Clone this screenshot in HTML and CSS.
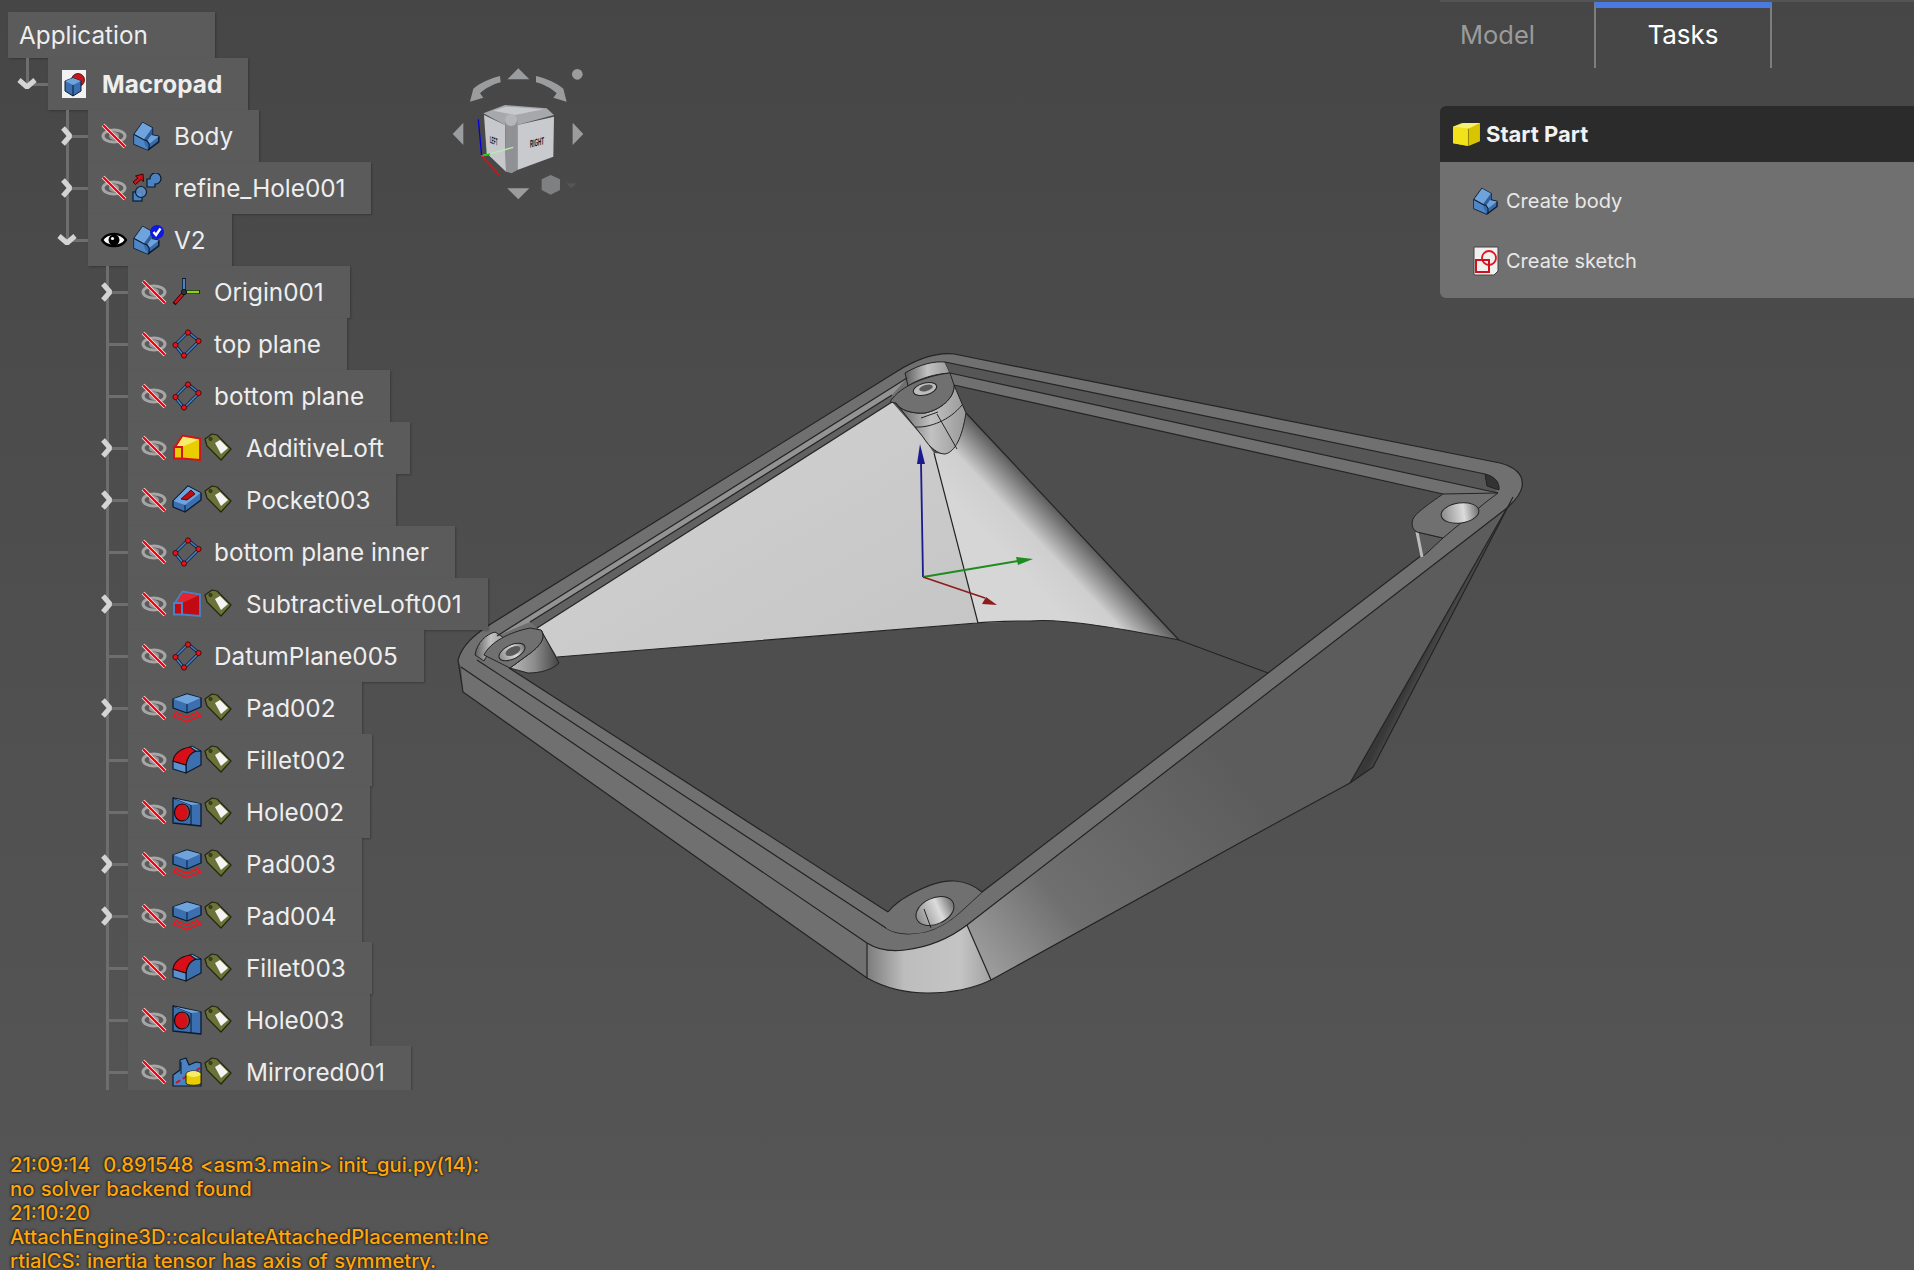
FILE: index.html
```html
<!DOCTYPE html>
<html>
<head>
  <title>FreeCAD - Macropad</title>
  <link rel="stylesheet" href="styles.css">
</head>
<body>
  <svg width="0" height="0" class="defs">
    <defs>
      <symbol id="i-eye-off" viewBox="0 0 26 26">
        <ellipse cx="13" cy="13" rx="11" ry="6" fill="none" stroke="#a6a6a6" stroke-width="3"/>
        <ellipse cx="13" cy="13" rx="5" ry="4" fill="#979797"/>
        <path d="M2 2L24 24" stroke="#fff" stroke-width="3.800"/>
        <path d="M2 2L24 24" stroke="#f0000f" stroke-width="2.400"/>
      </symbol>
      <symbol id="i-eye" viewBox="0 0 26 26">
        <path d="M1 13C6 5 20 5 25 13C20 21 6 21 1 13Z" fill="#fff" stroke="#000" stroke-width="2.400"/>
        <circle cx="13" cy="13" r="5.500" fill="#000"/>
        <circle cx="11.500" cy="11.500" r="1.600" fill="#fff"/>
      </symbol>
      <symbol id="i-body" viewBox="0 0 26 28">
        <path d="M1 12.500L9 1.500L18 6.500V13L24 14.500V19.500L14 27L1 21.500Z" fill="#3a6cab" stroke="#0b1b2e" stroke-width="1.400" stroke-linejoin="round"/>
        <path d="M1 12.500L9 1.500L18 6.500L10 17.500Z" fill="#6fa3dc"/>
        <path d="M10 17.500L18 6.500V13L13 18.500Z" fill="#2f5e9c"/>
        <path d="M13 18.500L17 13L24 14.500L15 21.500Z" fill="#6fa3dc"/>
        <path d="M1 12.500L10 17.500L11 22L14 27L1 21.500Z" fill="#4f86c6"/>
        <path d="M1 12.500L10 17.500L13 18.500L15 21.500V27" fill="none" stroke="#0b1b2e" stroke-width="1.100"/>
      </symbol>
      <symbol id="i-check" viewBox="0 0 14 14">
        <circle cx="7" cy="7" r="7" fill="#0f18e0"/>
        <path d="M3.500 7L6 10L10.500 3.500" fill="none" stroke="#fff" stroke-width="2.400"/>
      </symbol>
      <symbol id="i-refine" viewBox="0 0 30 30">
        <path d="M1 9L6 5L3.500 3L11 1L11.500 8.500L9 6.500L3.500 11.500Z" fill="#c8141e" stroke="#400" stroke-width="1"/>
        <path d="M15 14V6H18A5.500 5.500 0 1 1 23 11V14Z" fill="#4a82c4" stroke="#0b1b2e" stroke-width="1.200"/>
        <rect x="1" y="19" width="9" height="9" fill="#4a82c4" stroke="#0b1b2e" stroke-width="1.200"/>
        <circle cx="9" cy="19" r="5.500" fill="#5f95d2" fill-opacity=".85" stroke="#0b1b2e" stroke-width="1.200"/>
      </symbol>
      <symbol id="i-origin" viewBox="0 0 30 30">
        <path d="M12 1V15" stroke="#0b1b2e" stroke-width="4"/>
        <path d="M12 2V14" stroke="#4a82c4" stroke-width="2.400"/>
        <path d="M13 15H28" stroke="#1d2e0b" stroke-width="4"/>
        <path d="M14 15H27" stroke="#8ad11e" stroke-width="2.400"/>
        <path d="M11 17L2 27" stroke="#300" stroke-width="4"/>
        <path d="M11 17L3 26" stroke="#d0141e" stroke-width="2.400"/>
        <circle cx="12" cy="15" r="2.600" fill="#333" stroke="#111"/>
      </symbol>
      <symbol id="i-plane" viewBox="0 0 30 30">
        <path d="M16 3L27 12L12 27L3 16Z" fill="none" stroke="#0b1b2e" stroke-width="3"/>
        <path d="M16 3L27 12L12 27L3 16Z" fill="none" stroke="#4a82c4" stroke-width="1.600"/>
        <g fill="#e2141e" stroke="#300" stroke-width=".8">
          <circle cx="16" cy="3.500" r="2.600"/>
          <circle cx="26.500" cy="12" r="2.600"/>
          <circle cx="12" cy="26.500" r="2.600"/>
          <circle cx="3.500" cy="16" r="2.600"/>
        </g>
      </symbol>
      <symbol id="i-tag" viewBox="0 0 30 30">
        <path d="M1 6L8 1L13 2L27 16L17 27L3 13Z" fill="#6c7338" stroke="#23260f" stroke-width="1.200" stroke-linejoin="round"/>
        <circle cx="6.500" cy="6" r="1.700" fill="#3f4222" stroke="#23260f" stroke-width=".6"/>
        <path d="M11 10L16 7L24 15L17 21Z" fill="#f4f4f4"/>
      </symbol>
      <symbol id="i-loft-add" viewBox="0 0 30 30">
        <path d="M3 14L11 3L28 6V26L3 26Z" fill="#e8cd00"/>
        <path d="M4 14L11 3.500L27 6.500L10 14Z" fill="#f6eb6a"/>
        <path d="M3 14L10.500 2.500L28 5.500V27L10 25.500" fill="none" stroke="#d6101a" stroke-width="1.800"/>
        <rect x="2" y="14" width="8" height="11.500" fill="#e8cd00" stroke="#d6101a" stroke-width="2"/>
      </symbol>
      <symbol id="i-loft-sub" viewBox="0 0 30 30">
        <path d="M3 14L11 3L28 6V26L3 26Z" fill="#c20a12"/>
        <path d="M4 14L11 3.500L27 6.500L10 14Z" fill="#e4252d"/>
        <path d="M3 14L10.500 2.500L28 5.500V27L10 25.500" fill="none" stroke="#4a82c4" stroke-width="1.800"/>
        <rect x="2" y="14" width="8" height="11.500" fill="#c20a12" stroke="#4a82c4" stroke-width="2"/>
      </symbol>
      <symbol id="i-pocket" viewBox="0 0 30 30">
        <path d="M1 16L16 1L29 8V15L13 27L1 22Z" fill="#3b6fb0" stroke="#0b1b2e" stroke-width="1.300" stroke-linejoin="round"/>
        <path d="M1.500 16L16 1.500L28.500 8L13 20Z" fill="#6fa3dc"/>
        <path d="M13 20V27" stroke="#0b1b2e"/>
        <path d="M9 14L19 5L23 9L15 15Z" fill="#c00a12" stroke="#300" stroke-width=".8"/>
      </symbol>
      <symbol id="i-pad" viewBox="0 0 30 30">
        <path d="M1 6L15 .8L29 5V14L15 20L1 15Z" fill="#3b6fb0" stroke="#0b1b2e" stroke-width="1.300" stroke-linejoin="round"/>
        <path d="M1.500 6L15 1.300L28.500 5L15 11Z" fill="#6fa3dc"/>
        <path d="M15 11V20" stroke="#0b1b2e"/>
        <path d="M5 19L1.500 23L14.500 28.500L28.500 23L24 18.500M6 21L15 24L24 20.500" fill="none" stroke="#ee1620" stroke-width="1.800" stroke-linejoin="round"/>
      </symbol>
      <symbol id="i-fillet" viewBox="0 0 30 30">
        <path d="M14 19C15 12 18 8 24 6L29 6V20L14 28Z" fill="#3b6fb0" stroke="#0b1b2e" stroke-width="1.200" stroke-linejoin="round"/>
        <path d="M1 16L14 20V28L1 24Z" fill="#5a92d0" stroke="#0b1b2e" stroke-width="1.200" stroke-linejoin="round"/>
        <path d="M1 16C2 9 8 4 18 2L24 6C18 8 15 12 14 20Z" fill="#d80f18" stroke="#2a0a0a" stroke-width="1.200" stroke-linejoin="round"/>
        <path d="M18 2L20 1L29 6H24Z" fill="#6fa3dc" stroke="#0b1b2e" stroke-width="1"/>
      </symbol>
      <symbol id="i-hole" viewBox="0 0 30 30">
        <path d="M1 1L29 7V29L1 26Z" fill="#3b6fb0" stroke="#0b1b2e" stroke-width="1.300" stroke-linejoin="round"/>
        <path d="M1 1L19 8V28" fill="none" stroke="#0b1b2e" stroke-width="1"/>
        <path d="M2 1.500L29 7L19 8Z" fill="#6fa3dc"/>
        <ellipse cx="10" cy="15.500" rx="7.500" ry="8.500" fill="#d50f18" stroke="#1a0a0a" stroke-width="1.200"/>
        <path d="M11 7.500C16 9 17 22 11 24C18 24 19 8 11 7.500Z" fill="#555"/>
      </symbol>
      <symbol id="i-mirrored" viewBox="0 0 30 30">
        <path d="M1 18L8 13V3L14 1L17 8L24 5L29 6V29H1Z" fill="#4a82c4" stroke="#0b1b2e" stroke-width="1.200" stroke-linejoin="round"/>
        <path d="M9 5V17" stroke="#0b1b2e"/>
        <path d="M4 26L28 11" stroke="#d0101a" stroke-width="2" stroke-dasharray="5 3"/>
        <path d="M14 17C14 13 29 13 29 17V26C29 29 14 29 14 26Z" fill="#e8cd00" stroke="#2a2400" stroke-width="1"/>
        <ellipse cx="21.500" cy="17" rx="7" ry="3" fill="#f6eb6a"/>
      </symbol>
      <symbol id="i-doc" viewBox="0 0 24 28">
        <rect width="24" height="28" fill="#f2f2f2"/>
        <circle cx="16" cy="10" r="6.500" fill="#c8141e" stroke="#400" stroke-width=".8"/>
        <path d="M3 11L11 8L19 11V21L11 26L3 21Z" fill="#3b6fb0" stroke="#0b1b2e" stroke-width="1"/>
        <path d="M3 11L11 8L19 11L11 15Z" fill="#6fa3dc"/>
        <path d="M11 15V26" stroke="#0b1b2e"/>
      </symbol>
      <symbol id="i-sketch" viewBox="0 0 26 30">
        <path d="M1 1H25V25L21 29H1Z" fill="#f0f0f0" stroke="#444"/>
        <circle cx="16" cy="12" r="7" fill="none" stroke="#e2141e" stroke-width="1.800"/>
        <rect x="3" y="14" width="13" height="12" fill="none" stroke="#d0101a" stroke-width="2"/>
      </symbol>
      <symbol id="i-cube" viewBox="0 0 30 26">
        <path d="M1 5L10 1H29V20L17 25L1 22Z" fill="#d9c400"/>
        <path d="M1 5L17 7V25L1 22Z" fill="#f2e21a"/>
        <path d="M1 5L12 1H29L17 7Z" fill="#f8f070"/>
        <path d="M17 7V25" stroke="#8a7d00"/>
      </symbol>
      <symbol id="i-open" viewBox="0 0 24 16">
        <path d="M4 4L12 11L20 4" fill="none" stroke="#d4d4d4" stroke-width="5" stroke-linejoin="bevel"/>
      </symbol>
      <symbol id="i-closed" viewBox="0 0 16 24">
        <path d="M4 4L11 12L4 20" fill="none" stroke="#d4d4d4" stroke-width="5" stroke-linejoin="bevel"/>
      </symbol>

      <linearGradient id="g-face" x1="0" y1="0" x2="1" y2="1">
        <stop offset="0" stop-color="#d2d2d2"/>
        <stop offset="1" stop-color="#c5c5c5"/>
      </linearGradient>
      <linearGradient id="g-cone" gradientUnits="userSpaceOnUse" x1="1009" y1="561" x2="1060" y2="513">
        <stop offset="0" stop-color="#d6d6d6"/>
        <stop offset=".5" stop-color="#cfcfcf"/>
        <stop offset="1" stop-color="#5c5c5c"/>
      </linearGradient>
      <linearGradient id="g-wall" gradientUnits="userSpaceOnUse" x1="985" y1="960" x2="1230" y2="760">
        <stop offset="0" stop-color="#9a9a9a"/>
        <stop offset=".3" stop-color="#6f6f6f"/>
        <stop offset="1" stop-color="#5c5c5c"/>
      </linearGradient>
      <linearGradient id="g-sliver" gradientUnits="userSpaceOnUse" x1="1425" y1="650" x2="1445" y2="660">
        <stop offset="0" stop-color="#383838"/>
        <stop offset="1" stop-color="#6a6a6a"/>
      </linearGradient>
      <linearGradient id="g-corner">
        <stop offset="0" stop-color="#7c7c7c"/>
        <stop offset=".3" stop-color="#bdbdbd"/>
        <stop offset=".75" stop-color="#c4c4c4"/>
        <stop offset="1" stop-color="#a2a2a2"/>
      </linearGradient>
      <linearGradient id="g-boss">
        <stop offset="0" stop-color="#5e5e5e"/>
        <stop offset=".5" stop-color="#c2c2c2"/>
        <stop offset="1" stop-color="#989898"/>
      </linearGradient>
      <linearGradient id="g-boss-dark">
        <stop offset="0" stop-color="#bbb"/>
        <stop offset=".5" stop-color="#8c8c8c"/>
        <stop offset="1" stop-color="#444"/>
      </linearGradient>
      <linearGradient id="g-hole">
        <stop offset="0" stop-color="#8a8a8a"/>
        <stop offset=".6" stop-color="#dcdcdc"/>
        <stop offset="1" stop-color="#6e6e6e"/>
      </linearGradient>
    </defs>
  </svg>

  <div class="viewport">
    <svg class="scene" viewBox="0 0 1914 1270">
      <!-- outer walls -->
      <path d="M967 925L1507 508L1350 783L1245 840L991 980Z" fill="url(#g-wall)"/>
      <path d="M1513 497L1507 508L1350 783L1373 767Z" fill="url(#g-sliver)"/>
      <path d="M867 943C878 950 890 952 905 950C930 947 950 938 967 925L991 980C970 990 950 993 928 993C905 993 885 988 867 978Z" fill="url(#g-corner)"/>
      <path d="M461 667L867 943V978L463 692Z" fill="#707070"/>

      <!-- rim and opening -->
      <path d="M458 660C462 645 475 635 486 627L896 372C915 360 935 352 954 354L1500 463C1515 467 1524 475 1522 487C1520 497 1512 503 1507 508L967 925C950 938 930 947 905 950C890 952 878 950 867 943L461 667Z" fill="#707070"/>
      <path d="M509 668L888 912C895 903 904 898 913 893C930 884 945 880 955 881C968 882 976 887 982 892L1422 555L1417 532L1412 522L1443 494L954 385L892 402L537 628L510 668Z" fill="#4e4e4e"/>

      <!-- ledge top left -->
      <path d="M497 636L907 378L892 395L530 622Z" fill="#939393"/>
      <path d="M530 622L892 395V402L537 628Z" fill="#626262"/>
      <path d="M475 655C477 642 487 634 495 632L507 640C496 644 488 652 484 661Z" fill="url(#g-boss)" stroke="#222"/>
      <path d="M905 373C920 364 935 361 945 362L950 373C935 374 920 378 908 386Z" fill="url(#g-boss)" stroke="#222"/>

      <!-- groove top right -->
      <path d="M945 362L1485 474L1498 493L950 373Z" fill="#565656"/>
      <path d="M1485 474C1494 476 1500 482 1499 490L1487 486Z" fill="#333" stroke="#222"/>

      <!-- big light face -->
      <path d="M537 628L892 402L923 437L934 453L978 623L557 657L541 630Z" fill="url(#g-face)"/>
      <path d="M966 413L1179 640C1120 628 1060 618 1030 621L978 623L934 453L945 454Z" fill="url(#g-cone)"/>

      <!-- edges -->
      <g fill="none" stroke="#242424" stroke-width="1.200">
        <path d="M557 657L977 623C990 621 1010 621 1030 621C1060 618 1120 628 1179 640L1268 673"/>
        <path d="M966 413L1179 640"/>
        <path d="M934 453L978 623"/>
        <path d="M537 628L892 402"/>
        <path d="M530 622L892 395"/>
        <path d="M497 636L907 378"/>
        <path d="M458 660C462 645 475 635 486 627L896 372C915 360 935 352 954 354L1500 463C1515 467 1524 475 1522 487C1520 497 1512 503 1507 508L967 925"/>
        <path d="M945 362L1485 474"/>
        <path d="M950 373L1498 493"/>
        <path d="M954 385L1443 494"/>
        <path d="M982 892L1422 555"/>
        <path d="M461 667L867 943C878 950 890 952 905 950C930 947 950 938 967 925"/>
        <path d="M458 660L463 692L867 978C885 988 905 993 928 993C950 993 970 990 991 980L1245 840L1350 783L1373 767L1513 497"/>
        <path d="M1507 508L1350 783"/>
        <path d="M477 660L886 928C895 934 910 935 925 932C940 928 950 921 959 913L982 892"/>
        <path d="M509 668L888 912"/>
        <path d="M867 943V978"/>
        <path d="M967 925L991 980"/>
      </g>

      <!-- left boss -->
      <path d="M541 630L559 663C552 670 540 673 528 673L510 668L525 657C535 650 548 640 541 630Z" fill="url(#g-boss-dark)" stroke="#242424"/>
      <path d="M510 668L484 655C490 642 510 632 530 628L541 630C548 640 535 650 525 657Z" fill="#707070" stroke="#242424"/>
      <ellipse cx="512" cy="652" rx="14" ry="7" transform="rotate(-25 512 652)" fill="url(#g-hole)" stroke="#242424"/>
      <ellipse cx="513" cy="651" rx="8" ry="4" transform="rotate(-25 513 651)" fill="#5a5a5a"/>

      <!-- top boss -->
      <path d="M896 403L923 437C930 448 938 454 945 454C955 452 962 438 966 413L954 385C955 398 940 410 925 413C912 414 900 410 896 403Z" fill="url(#g-boss)" stroke="#242424"/>
      <path d="M890 402C900 385 930 375 950 373L954 385C955 398 940 410 925 413C912 414 900 410 896 403Z" fill="#707070" stroke="#242424"/>
      <ellipse cx="925" cy="389" rx="12" ry="6" transform="rotate(-15 925 389)" fill="#bdbdbd" stroke="#242424"/>
      <ellipse cx="926" cy="388" rx="7" ry="3" transform="rotate(-15 926 388)" fill="#5a5a5a"/>
      <path d="M915 427C930 428 950 420 962 405M937 414L957 449M938 412L921 418" fill="none" stroke="#242424"/>

      <!-- right boss -->
      <path d="M1417 532L1422 557L1428 552L1443 538Z" fill="#5c5c5c" stroke="#242424"/>
      <path d="M1417 532L1422 557" stroke="#bbb" stroke-width="3"/>
      <path d="M1443 494C1430 503 1420 510 1414 517C1410 524 1413 530 1417 532L1443 538L1486 502L1498 493Z" fill="#707070" stroke="#242424"/>
      <ellipse cx="1460" cy="513" rx="19" ry="10" transform="rotate(-8 1460 513)" fill="url(#g-hole)" stroke="#242424"/>

      <!-- bottom boss -->
      <path d="M888 912C895 903 904 898 913 893C930 884 945 880 955 881C968 882 976 887 982 892L959 913C950 921 940 928 925 932C910 935 895 934 886 928Z" fill="#707070" stroke="none"/>
      <path d="M888 912C895 903 904 898 913 893C930 884 945 880 955 881C968 882 976 887 982 892" fill="none" stroke="#242424" stroke-width="1.200"/>
      <ellipse cx="935" cy="911" rx="20" ry="13" transform="rotate(-24 935 911)" fill="url(#g-hole)" stroke="#242424"/>
      <path d="M924 909L931 928" stroke="#242424"/>

      <!-- axes -->
      <g fill="none" stroke-width="1.800">
        <path d="M923 577L921 462" stroke="#1b1b8e"/>
        <path d="M923 577L1018 561" stroke="#1e8c1e"/>
        <path d="M923 577L985 598" stroke="#8e1c1c"/>
      </g>
      <path d="M920 444L917 464H925Z" fill="#1b1b8e"/>
      <path d="M1033 559L1016 557L1018 565Z" fill="#1e8c1e"/>
      <path d="M997 605L986 597L982 604Z" fill="#8e1c1c"/>

      <!-- nav cube -->
      <g transform="translate(430 50) scale(.3333)">
        <g fill="#9a9c9e">
          <path d="M232 88L265 55L298 88Z"/>
          <path d="M232 415L265 448L298 415Z"/>
          <path d="M68 252L100 218V285Z"/>
          <path d="M428 218L460 252L428 285Z"/>
          <path d="M120 155L130 116C148 100 180 85 210 78L212 97C190 103 165 115 150 130L160 143Z"/>
          <path d="M410 155L400 116C382 100 350 85 318 78L318 97C340 103 365 115 380 130L370 143Z"/>
          <circle cx="442" cy="73" r="16"/>
          <path d="M335 388L362 375L390 388V420L362 434L335 420Z" fill="#7e8082"/>
          <path d="M408 400H440L424 415Z" fill="#555"/>
        </g>
        <path d="M160 190L225 165L350 175L372 195L262 225L225 225Z" fill="#a6a8ac"/>
        <path d="M190 182L228 170L340 178L255 195Z" fill="#c8c9cc"/>
        <path d="M162 195L225 225L228 365L170 310Z" fill="#c7c8cc"/>
        <path d="M262 225L372 200L370 320L262 360Z" fill="#c9cace"/>
        <path d="M225 210H262V360L245 370L228 365Z" fill="#8f9194"/>
        <circle cx="243" cy="210" r="18" fill="#b4b6b8"/>
        <text class="cube-label" transform="matrix(.28 .12 .02 .95 180 278)">LEFT</text>
        <text class="cube-label" transform="matrix(.42 -.1 0 1 300 293)">RIGHT</text>
        <path d="M155 318L145 208" stroke="#0000e0" stroke-width="4"/>
        <path d="M155 318L250 292" stroke="#b8e8b0" stroke-width="4"/>
        <path d="M155 318L180 312" stroke="#0bd00b" stroke-width="5"/>
        <path d="M155 318L208 375" stroke="#e01010" stroke-width="4"/>
      </g>
    </svg>

    <div class="overlay">
      <div class="left-col">
        <ul class="tree">
          <li class="row root"><div class="label app-label">Application</div></li>
          <li class="row">
            <div class="gutter line-down"><svg class="twist-open"><use href="#i-open"/></svg></div>
            <div class="label doc"><svg class="ico-doc"><use href="#i-doc"/></svg><b>Macropad</b></div>
          </li>
          <li class="row lvl-1">
            <div class="gutter line-full"><svg class="twist"><use href="#i-closed"/></svg></div>
            <div class="label"><svg class="eye"><use href="#i-eye-off"/></svg><svg class="ico"><use href="#i-body"/></svg><span>Body</span></div>
          </li>
          <li class="row lvl-1">
            <div class="gutter line-full"><svg class="twist"><use href="#i-closed"/></svg></div>
            <div class="label"><svg class="eye"><use href="#i-eye-off"/></svg><svg class="ico"><use href="#i-refine"/></svg><span>refine_Hole001</span></div>
          </li>
          <li class="row lvl-1">
            <div class="gutter line-up"><svg class="twist-open"><use href="#i-open"/></svg></div>
            <div class="label"><svg class="eye"><use href="#i-eye"/></svg><div class="ico-stack"><svg class="ico"><use href="#i-body"/></svg><svg class="badge"><use href="#i-check"/></svg></div><span>V2</span></div>
          </li>
          <li class="row lvl-2">
            <div class="gutter line-full"><svg class="twist"><use href="#i-closed"/></svg></div>
            <div class="label"><svg class="eye"><use href="#i-eye-off"/></svg><svg class="ico"><use href="#i-origin"/></svg><span>Origin001</span></div>
          </li>
          <li class="row lvl-2">
            <div class="gutter line-full"></div>
            <div class="label"><svg class="eye"><use href="#i-eye-off"/></svg><svg class="ico"><use href="#i-plane"/></svg><span>top plane</span></div>
          </li>
          <li class="row lvl-2">
            <div class="gutter line-full"></div>
            <div class="label"><svg class="eye"><use href="#i-eye-off"/></svg><svg class="ico"><use href="#i-plane"/></svg><span>bottom plane</span></div>
          </li>
          <li class="row lvl-2">
            <div class="gutter line-full"><svg class="twist"><use href="#i-closed"/></svg></div>
            <div class="label"><svg class="eye"><use href="#i-eye-off"/></svg><svg class="ico"><use href="#i-loft-add"/></svg><svg class="ico"><use href="#i-tag"/></svg><span>AdditiveLoft</span></div>
          </li>
          <li class="row lvl-2">
            <div class="gutter line-full"><svg class="twist"><use href="#i-closed"/></svg></div>
            <div class="label"><svg class="eye"><use href="#i-eye-off"/></svg><svg class="ico"><use href="#i-pocket"/></svg><svg class="ico"><use href="#i-tag"/></svg><span>Pocket003</span></div>
          </li>
          <li class="row lvl-2">
            <div class="gutter line-full"></div>
            <div class="label"><svg class="eye"><use href="#i-eye-off"/></svg><svg class="ico"><use href="#i-plane"/></svg><span>bottom plane inner</span></div>
          </li>
          <li class="row lvl-2">
            <div class="gutter line-full"><svg class="twist"><use href="#i-closed"/></svg></div>
            <div class="label"><svg class="eye"><use href="#i-eye-off"/></svg><svg class="ico"><use href="#i-loft-sub"/></svg><svg class="ico"><use href="#i-tag"/></svg><span>SubtractiveLoft001</span></div>
          </li>
          <li class="row lvl-2">
            <div class="gutter line-full"></div>
            <div class="label"><svg class="eye"><use href="#i-eye-off"/></svg><svg class="ico"><use href="#i-plane"/></svg><span>DatumPlane005</span></div>
          </li>
          <li class="row lvl-2">
            <div class="gutter line-full"><svg class="twist"><use href="#i-closed"/></svg></div>
            <div class="label"><svg class="eye"><use href="#i-eye-off"/></svg><svg class="ico"><use href="#i-pad"/></svg><svg class="ico"><use href="#i-tag"/></svg><span>Pad002</span></div>
          </li>
          <li class="row lvl-2">
            <div class="gutter line-full"></div>
            <div class="label"><svg class="eye"><use href="#i-eye-off"/></svg><svg class="ico"><use href="#i-fillet"/></svg><svg class="ico"><use href="#i-tag"/></svg><span>Fillet002</span></div>
          </li>
          <li class="row lvl-2">
            <div class="gutter line-full"></div>
            <div class="label"><svg class="eye"><use href="#i-eye-off"/></svg><svg class="ico"><use href="#i-hole"/></svg><svg class="ico"><use href="#i-tag"/></svg><span>Hole002</span></div>
          </li>
          <li class="row lvl-2">
            <div class="gutter line-full"><svg class="twist"><use href="#i-closed"/></svg></div>
            <div class="label"><svg class="eye"><use href="#i-eye-off"/></svg><svg class="ico"><use href="#i-pad"/></svg><svg class="ico"><use href="#i-tag"/></svg><span>Pad003</span></div>
          </li>
          <li class="row lvl-2">
            <div class="gutter line-full"><svg class="twist"><use href="#i-closed"/></svg></div>
            <div class="label"><svg class="eye"><use href="#i-eye-off"/></svg><svg class="ico"><use href="#i-pad"/></svg><svg class="ico"><use href="#i-tag"/></svg><span>Pad004</span></div>
          </li>
          <li class="row lvl-2">
            <div class="gutter line-full"></div>
            <div class="label"><svg class="eye"><use href="#i-eye-off"/></svg><svg class="ico"><use href="#i-fillet"/></svg><svg class="ico"><use href="#i-tag"/></svg><span>Fillet003</span></div>
          </li>
          <li class="row lvl-2">
            <div class="gutter line-full"></div>
            <div class="label"><svg class="eye"><use href="#i-eye-off"/></svg><svg class="ico"><use href="#i-hole"/></svg><svg class="ico"><use href="#i-tag"/></svg><span>Hole003</span></div>
          </li>
          <li class="row lvl-2 last">
            <div class="gutter line-full"></div>
            <div class="label"><svg class="eye"><use href="#i-eye-off"/></svg><svg class="ico"><use href="#i-mirrored"/></svg><svg class="ico"><use href="#i-tag"/></svg><span>Mirrored001</span></div>
          </li>
        </ul>

        <div class="console">
          <div>21:09:14&nbsp; 0.891548 &lt;asm3.main&gt; init_gui.py(14):</div>
          <div>no solver backend found</div>
          <div>21:10:20</div>
          <div>AttachEngine3D::calculateAttachedPlacement:Ine</div>
          <div>rtialCS: inertia tensor has axis of symmetry.</div>
        </div>
      </div>

      <div class="right-col">
        <div class="tabs">
          <div class="tab">Model</div>
          <div class="tab active">Tasks</div>
        </div>
        <div class="panel">
          <div class="panel-head"><svg class="cube"><use href="#i-cube"/></svg>Start Part</div>
          <div class="panel-body">
            <div class="action"><svg class="action-ico"><use href="#i-body"/></svg>Create body</div>
            <div class="action"><svg class="action-ico"><use href="#i-sketch"/></svg>Create sketch</div>
          </div>
        </div>
      </div>
    </div>
  </div>
</body>
</html>
```

FILE: styles.css
```css
html, body {
  margin: 0;
  padding: 0;
  height: 100%;
  overflow: hidden;
}

body {
  font-family: Inter, "Liberation Sans", sans-serif;
  color: #eee;
}

.defs {
  display: block;
  height: 0;
}

.viewport {
  position: relative;
  width: 1914px;
  height: 1270px;
  overflow: hidden;
  background: linear-gradient(#464646, #4f4f4f 50%, #565656);
}

.scene {
  position: absolute;
  left: 0;
  top: 0;
  width: 1914px;
  height: 1270px;
}

.cube-label {
  font-family: "Liberation Sans", sans-serif;
  font-size: 32px;
  font-weight: bold;
  fill: #111;
}

.overlay {
  position: relative;
  display: flex;
  justify-content: space-between;
  height: 100%;
}

.left-col {
  padding: 12px 0 0 8px;
}

/* tree */
.tree {
  list-style-type: none;
  margin: 0;
  padding: 0;
}

.row {
  display: flex;
  height: 52px;
}

.row.root {
  height: 46px;
}

.lvl-1 {
  margin-left: 40px;
}

.lvl-2 {
  margin-left: 80px;
}

.row.last {
  height: 44px;
  overflow: hidden;
}

.row.last .label {
  height: 52px;
}

.gutter {
  display: flex;
  align-items: center;
  flex: none;
  width: 40px;
  background-repeat: no-repeat;
}

.line-full {
  background-image: linear-gradient(#6e6e6e, #6e6e6e), linear-gradient(#6e6e6e, #6e6e6e);
  background-size: 3px 100%, 22px 3px;
  background-position: 18px 0, 18px 25px;
}

.line-up,
.line-down {
  background-image: linear-gradient(#6e6e6e, #6e6e6e), linear-gradient(#6e6e6e, #6e6e6e);
  background-size: 3px 26px, 22px 3px;
  background-position: 18px 0, 18px 25px;
}

.row.last .gutter {
  height: 52px;
}

.twist {
  width: 16px;
  height: 24px;
  margin-left: 11px;
  filter: blur(0.6px);
}

.twist-open {
  width: 24px;
  height: 16px;
  margin-left: 7px;
  filter: blur(0.6px);
}

.label {
  display: flex;
  align-items: center;
  height: 100%;
  padding: 0 26px 0 13px;
  background: #5b5b5b;
  box-shadow: 1px 1px 2px rgba(0, 0, 0, 0.25);
  font-size: 24.300px;
  line-height: 1;
  white-space: nowrap;
}

.app-label {
  padding: 0 67px 0 11px;
}

.label.doc {
  padding-left: 14px;
}

.label span {
  margin-left: 10px;
}

.eye {
  flex: none;
  width: 26px;
  height: 26px;
  margin-right: 5px;
}

.ico {
  flex: none;
  width: 30px;
  height: 30px;
  margin-right: 2px;
}

.ico-stack {
  position: relative;
  display: flex;
}

.badge {
  position: absolute;
  top: 0;
  right: 0;
  width: 14px;
  height: 14px;
}

.ico-doc {
  flex: none;
  width: 24px;
  height: 28px;
  margin-right: 16px;
}

/* console */
.console {
  margin-top: 63px;
  font-size: 20.200px;
  font-weight: 500;
  line-height: 24px;
  word-spacing: 1px;
  color: #ffa60a;
  white-space: nowrap;
  padding-left: 2px;
  text-shadow: 0 0 2px #222, 0 0 2px #222, 0 0 3px #222;
}

/* right side */
.right-col {
  width: 474px;
}

.tabs {
  display: flex;
  height: 66px;
  border-top: 2px solid #545454;
}

.tab {
  width: 134px;
  padding: 17px 0 0 20px;
  font-size: 25.500px;
  line-height: 32px;
  color: #9b9b9b;
}

.tab.active {
  width: 174px;
  padding: 11px 0 0 0;
  font-size: 26px;
  color: #fff;
  text-align: center;
  border-top: 6px solid #4a7ae0;
  border-left: 2px solid #7d7d7d;
  border-right: 2px solid #7d7d7d;
}

.panel {
  margin-top: 38px;
  border-radius: 6px 0 0 6px;
  overflow: hidden;
}

.panel-head {
  display: flex;
  align-items: center;
  height: 56px;
  padding-left: 12px;
  background: #2b2b2b;
  font-size: 22px;
  font-weight: bold;
  color: #f2f2f2;
}

.cube {
  width: 29px;
  height: 25px;
  margin-right: 5px;
}

.panel-body {
  height: 136px;
  padding: 9px 0 0 33px;
  box-sizing: border-box;
  background: #707070;
}

.action {
  display: flex;
  align-items: center;
  height: 60px;
  font-size: 20px;
  color: #e8e8e8;
}

.action-ico {
  width: 26px;
  height: 30px;
  margin-right: 7px;
}
```
